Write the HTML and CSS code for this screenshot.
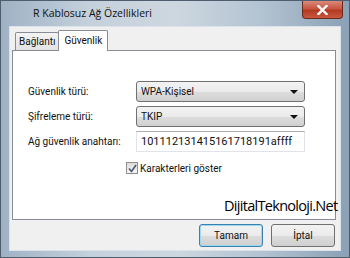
FILE: index.html
```html
<!DOCTYPE html>
<html lang="tr">
<head>
    <meta charset="UTF-8" />
    <title>R Kablosuz Ağ Özellikleri</title>
    <link rel="stylesheet" href="styles.css">
</head>
<body>

    <div class="window">
        <div class="titlebar">
            <span class="title">R Kablosuz Ağ Özellikleri</span>
            <button class="close-btn">
                <svg width="11" height="10" viewBox="0 0 11 10">
                    <path d="M1.5 1 L9.5 9 M9.5 1 L1.5 9" stroke="#fff" stroke-width="2.4" stroke-linecap="square" />
                </svg>
            </button>
        </div>

        <div class="client">
            <div class="tabs">
                <div class="tab">Bağlantı</div>
                <div class="tab tab-active">Güvenlik</div>
            </div>

            <div class="panel">
                <div class="form-grid">
                    <label>Güvenlik türü:</label>
                    <div class="combo"><span>WPA-Kişisel</span><i class="arrow"></i></div>

                    <label>Şifreleme türü:</label>
                    <div class="combo"><span>TKIP</span><i class="arrow"></i></div>

                    <label>Ağ güvenlik anahtarı:</label>
                    <div class="textbox">101112131415161718191affff</div>
                </div>

                <div class="check-row">
                    <span class="checkbox">
                        <svg width="9" height="9" viewBox="0 0 9 9">
                            <path d="M1 4.5 L3.5 7.5 L8 1" fill="none" stroke="#4a5a6a" stroke-width="1.6" />
                        </svg>
                    </span>
                    <span>Karakterleri göster</span>
                </div>

                <div class="watermark">DijitalTeknoloji.Net</div>
            </div>

            <div class="button-row">
                <button class="btn btn-default">Tamam</button>
                <button class="btn">İptal</button>
            </div>
        </div>
    </div>

</body>
</html>
```

FILE: styles.css
```css
body {
    margin: 0;
    width: 350px;
    height: 258px;
    overflow: hidden;
    font-family: Roboto, "Open Sans", sans-serif;
    font-size: 10px;
    color: #111;
}
.window {
    box-sizing: border-box;
    width: 350px;
    height: 258px;
    border: 1px solid #4e5e6e;
    padding: 0 8px 6px 8px;
    display: flex;
    flex-direction: column;
    background: linear-gradient(to right, #9fb2c4 0%, #c4d0db 25%, #cdd7e0 50%, #b3c3d1 75%, #8aa0b5 100%);
}
.titlebar {
    margin: 0 -8px;
    height: 25px;
    display: flex;
    align-items: flex-start;
    padding-left: 32px;
    padding-right: 6px;
}
.title {
    margin-top: 5px;
    font-family: "Open Sans", sans-serif;
    font-size: 10.5px;
    color: #111;
}
.close-btn {
    margin-left: auto;
    width: 41px;
    height: 18px;
    border: 1px solid #6b2a20;
    border-top: none;
    border-radius: 0 0 4px 4px;
    background: linear-gradient(#d98a7c 0%, #c8553f 45%, #b23a22 55%, #c9583f 100%);
    display: flex;
    align-items: center;
    justify-content: center;
    padding: 0;
}
.client {
    flex: 1;
    background: #f0f0f0;
    border: 1px solid #dbe2e9;
    padding: 3px 4px 0 2px;
    display: flex;
    flex-direction: column;
    position: relative;
}
.tabs {
    display: flex;
    height: 20px;
    padding-left: 3px;
    position: relative;
    z-index: 1;
}
.tab {
    margin-top: 2px;
    height: 18px;
    box-sizing: border-box;
    padding: 1px 3px 0 3px;
    border: 1px solid #898c95;
    border-bottom: none;
    border-radius: 2px 2px 0 0;
    background: linear-gradient(#f4f4f4, #e2e2e2);
    line-height: 15px;
}
.tab-active {
    margin-top: 0;
    margin-left: -1px;
    height: 21px;
    padding: 2px 5px 0 5px;
    background: #fff;
}
.panel {
    height: 170px;
    box-sizing: border-box;
    border: 1px solid #898c95;
    background: #fff;
    padding: 30px 0 0 15px;
    position: relative;
}
.form-grid {
    display: grid;
    grid-template-columns: 108px 169px;
    row-gap: 4px;
    align-items: center;
}
.combo {
    height: 21px;
    box-sizing: border-box;
    border: 1px solid #707070;
    border-radius: 3px;
    background: linear-gradient(#f3f3f3 0%, #ebebeb 50%, #dddddd 51%, #d0d0d0 100%);
    display: flex;
    align-items: center;
    padding: 0 6px 0 4px;
}
.arrow {
    margin-left: auto;
    width: 0;
    height: 0;
    border-left: 4px solid transparent;
    border-right: 4px solid transparent;
    border-top: 4px solid #111;
}
.textbox {
    height: 21px;
    box-sizing: border-box;
    border: 1px solid #e2e3ea;
    border-top-color: #abadb3;
    background: #fff;
    padding: 0 4px;
    line-height: 19px;
    font-size: 11px;
}
.check-row {
    display: flex;
    align-items: center;
    gap: 2px;
    margin-top: 10px;
    padding-left: 98px;
}
.checkbox {
    width: 12px;
    height: 12px;
    box-sizing: border-box;
    border: 1px solid #8f8f8f;
    background: linear-gradient(#dcdcdc, #f6f6f6);
    display: flex;
    align-items: center;
    justify-content: center;
}
.watermark {
    position: absolute;
    left: 211px;
    top: 145px;
    font-family: "Open Sans", sans-serif;
    font-size: 14.5px;
    color: #000;
    letter-spacing: -0.7px;
}
.button-row {
    display: flex;
    justify-content: flex-end;
    gap: 8px;
    margin-top: 4px;
    padding-right: 1px;
}
.btn {
    width: 64px;
    height: 23px;
    border: 1px solid #707070;
    border-radius: 3px;
    background: linear-gradient(#f2f2f2 0%, #ebebeb 50%, #dddddd 51%, #cfcfcf 100%);
    font-family: Roboto, "Open Sans", sans-serif;
    font-size: 10px;
    color: #111;
    padding: 0;
}
.btn-default {
    border-color: #3c7fb1;
    box-shadow: inset 0 0 0 1px #9cd9f0;
}
```
